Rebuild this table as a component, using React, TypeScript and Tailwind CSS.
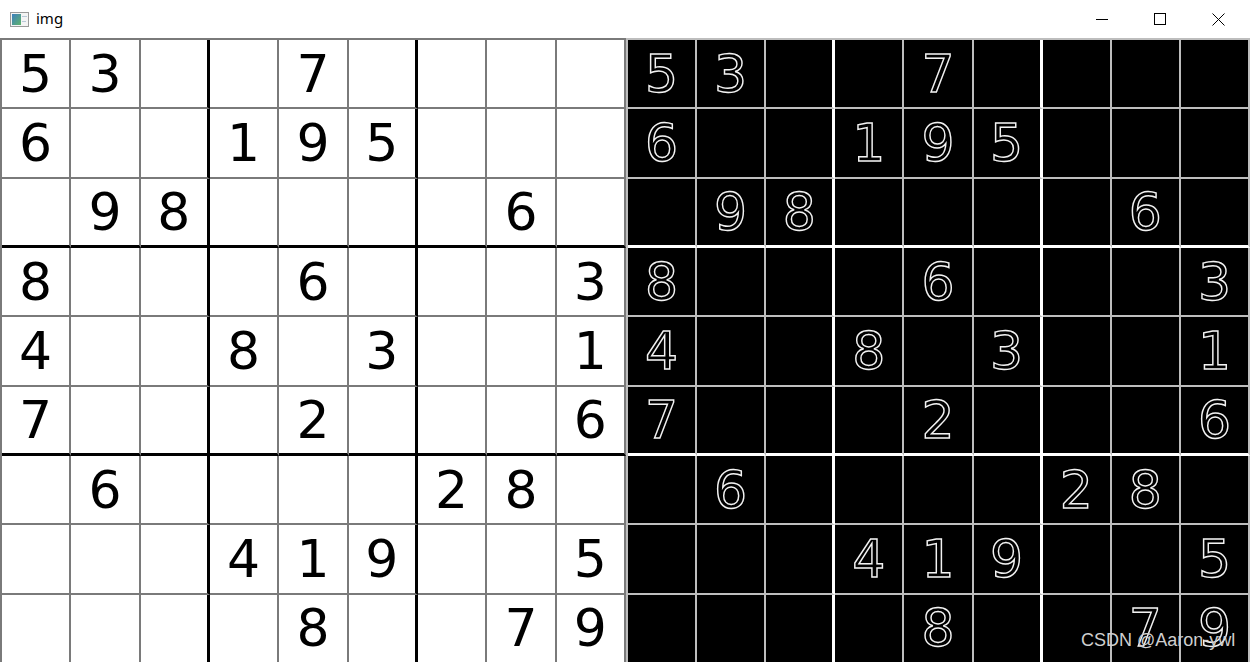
import React from "react";

const puzzle = [
  "53..7....",
  "6..195...",
  ".98....6.",
  "8...6...3",
  "4..8.3..1",
  "7...2...6",
  ".6....28.",
  "...419..5",
  "....8..79",
];

function Board({ dark }: { dark: boolean }) {
  return (
    <div
      className={
        dark
          ? "grid grid-cols-9 grid-rows-9 w-[624px] h-[626px] shrink-0 bg-black border-l-2 border-t-2 border-[#bdbdbd]"
          : "grid grid-cols-9 grid-rows-9 w-[626px] h-[626px] shrink-0 bg-white border-l-2 border-t-2 border-[#7a7a7a]"
      }
    >
      {puzzle.map((row, r) =>
        row.split("").map((ch, c) => {
          const thickR = c === 2 || c === 5;
          const thickB = r === 2 || r === 5;
          let cls = "flex items-center justify-center font-['DejaVu_Sans',sans-serif] text-[52px] leading-none ";
          if (dark) {
            cls += "text-transparent [-webkit-text-stroke:1.4px_#f2f2f2] ";
            cls += thickR ? "border-r-[3px] border-r-white " : "border-r-2 border-r-[#bdbdbd] ";
            cls += thickB ? "border-b-[3px] border-b-white" : "border-b-2 border-b-[#bdbdbd]";
          } else {
            cls += "text-black ";
            cls += thickR ? "border-r-[3px] border-r-black " : "border-r-2 border-r-[#7a7a7a] ";
            cls += thickB ? "border-b-[3px] border-b-black" : "border-b-2 border-b-[#7a7a7a]";
          }
          return (
            <div key={r + "-" + c} className={cls}>
              {ch === "." ? "" : ch}
            </div>
          );
        })
      )}
    </div>
  );
}

export default function App() {
  return (
    <div className="relative w-[1250px] h-[662px] overflow-hidden bg-white flex flex-col">
      {/* title bar */}
      <div className="h-[38px] shrink-0 flex items-center bg-white">
        <svg width="19" height="15" viewBox="0 0 19 15" className="ml-[10px]">
          <defs>
            <linearGradient id="ic" x1="0" y1="0" x2="1" y2="1">
              <stop offset="0" stopColor="#3d7fbf" />
              <stop offset="1" stopColor="#5fb36a" />
            </linearGradient>
          </defs>
          <rect x="0.5" y="0.5" width="18" height="14" fill="#f4f4f4" stroke="#9a9a9a" />
          <rect x="2" y="2" width="9" height="11" fill="url(#ic)" />
          <rect x="12" y="4" width="5" height="1" fill="#b8c8d8" />
          <rect x="12" y="9" width="4" height="1" fill="#b8c8d8" />
        </svg>
        <span className="ml-[7px] text-[15px] text-black font-['Noto_Sans',sans-serif] leading-none -mt-[1px]">img</span>
        <div className="ml-auto flex items-center h-full">
          <div className="w-[58px] h-full flex items-center justify-center">
            <svg width="12" height="12" viewBox="0 0 12 12">
              <line x1="0" y1="6.5" x2="12" y2="6.5" stroke="#000" strokeWidth="1" />
            </svg>
          </div>
          <div className="w-[58px] h-full flex items-center justify-center">
            <svg width="12" height="12" viewBox="0 0 12 12">
              <rect x="0.5" y="0.5" width="11" height="11" fill="none" stroke="#000" strokeWidth="1" />
            </svg>
          </div>
          <div className="w-[58px] h-full flex items-center justify-center mr-[3px]">
            <svg width="13" height="13" viewBox="0 0 13 13">
              <path d="M0.5 0.5 L12.5 12.5 M12.5 0.5 L0.5 12.5" stroke="#000" strokeWidth="1" />
            </svg>
          </div>
        </div>
      </div>
      {/* image area */}
      <div className="flex">
        <Board dark={false} />
        <Board dark={true} />
      </div>
      <div className="absolute left-[1081px] top-[631px] text-[18px] leading-none text-[#cfcfcf] font-['Liberation_Sans',sans-serif]">
        CSDN @Aaron-ywl
      </div>
    </div>
  );
}
